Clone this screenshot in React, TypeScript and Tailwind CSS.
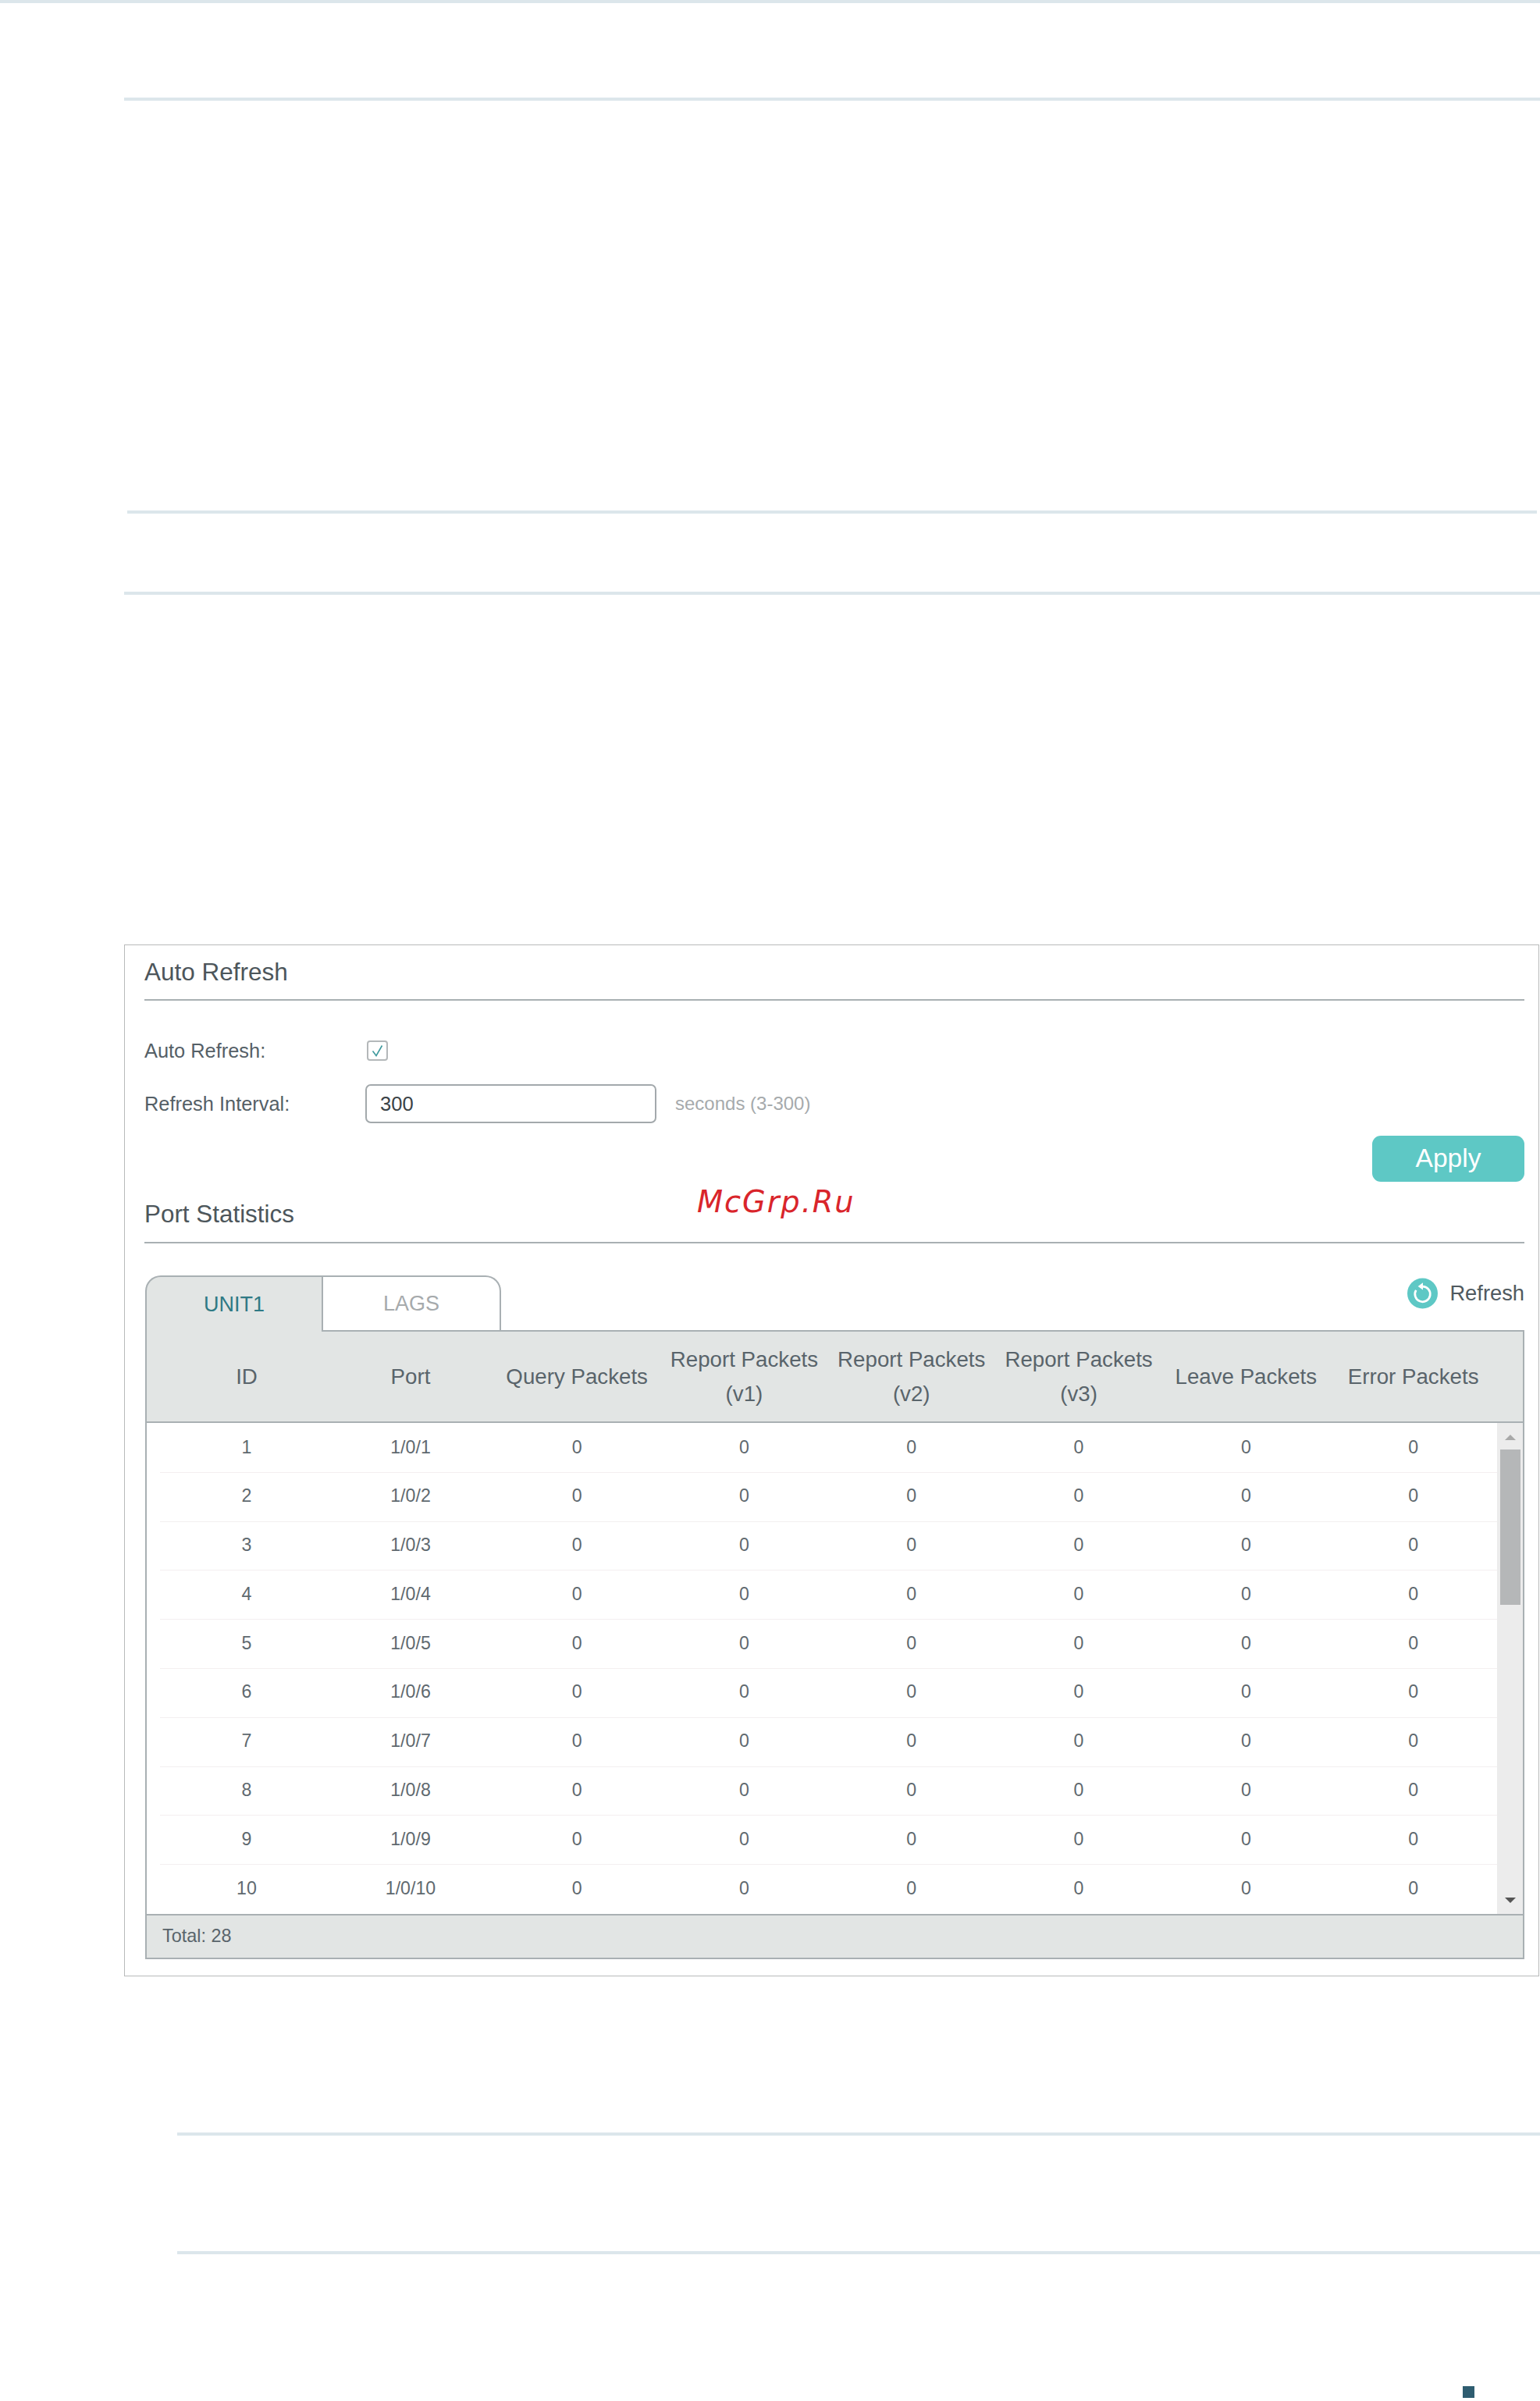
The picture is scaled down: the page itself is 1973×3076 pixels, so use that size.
import React from 'react';

const rows = [1, 2, 3, 4, 5, 6, 7, 8, 9, 10];
const counters = [0, 1, 2, 3, 4, 5];
const colsClass = 'grid grid-cols-[208px_212px_repeat(6,214.3px)] items-center text-center';

const Rule: React.FC<{ className: string }> = ({ className }) => (
  <div className={'h-[4px] bg-[#dce6eb] ' + className} />
);

const RefreshIcon: React.FC = () => (
  <svg width="39" height="40" viewBox="0 0 40 40">
    <circle cx="20" cy="20" r="20" fill="#5ec8c5" />
    <path d="M20 11 A10 10 0 1 1 11.5 15.8" fill="none" stroke="#fff" strokeWidth="2.8" />
    <polygon points="20.5,6 20.5,15.5 14,10.8" fill="#fff" />
  </svg>
);

const App: React.FC = () => {
  return (
    <div className="relative w-full h-[3076px] bg-white overflow-hidden font-['Liberation_Sans',Arial,sans-serif]">
      <Rule className="w-full" />
      <Rule className="mt-[121px] ml-[159px]" />
      <Rule className="mt-[525px] ml-[163px] w-[1806px]" />
      <Rule className="mt-[100px] ml-[159px]" />

      <div className="relative mt-[448px] ml-[159px] w-[1813px] h-[1322px] border border-[#b8baba] pl-[25px] pt-px">
        <div className="w-[1768px] flex flex-col">
          <div className="h-[70px] flex items-center border-b-2 border-[#a9b0b3] text-[31.5px] text-[#4d565b]">
            Auto Refresh
          </div>

          <div className="mt-[51px] h-[26px] flex items-center text-[25.4px] text-[#556067]">
            <span className="w-[285px]">Auto Refresh:</span>
            <div className="w-[27px] h-[26px] flex items-center justify-center rounded-[4px] border-2 border-[#b4b8ba]">
              <svg width="17" height="18" viewBox="0 0 17 18">
                <path d="M2.5 9.5 L7 15.5 L14.5 2.5" fill="none" stroke="#3f9a9e" strokeWidth="1.6" />
              </svg>
            </div>
          </div>

          <div className="mt-[30px] h-[50px] flex items-center text-[25.4px] text-[#556067]">
            <span className="w-[283px]">Refresh Interval:</span>
            <input
              readOnly
              value="300"
              className="w-[373px] h-[50px] pl-[17px] rounded-[7px] border-2 border-[#a3a9ac] text-[25.6px] text-[#3b4347] outline-none"
            />
            <span className="ml-[24px] text-[24px] text-[#a6aaac]">seconds (3-300)</span>
          </div>

          <button className="mt-[16px] self-end w-[195px] h-[59px] rounded-[11px] bg-[#5ec8c5] text-[33.6px] text-white">
            Apply
          </button>

          <div className="mt-[7px] h-[72px] flex items-center border-b-2 border-[#a9b0b3] text-[31.4px] text-[#4d565b]">
            Port Statistics
          </div>

          <div className="mt-[41px] ml-px w-[1767px]">
            <div className="flex h-[72px]">
              <div className="w-[228px] flex items-center justify-center rounded-tl-[20px] border-2 border-b-0 border-[#a9b0b3] bg-[#e2e5e4] text-[27px] text-[#2f7a85]">
                UNIT1
              </div>
              <div className="w-[228px] flex items-center justify-center rounded-tr-[20px] border-2 border-l-0 border-[#a9b0b3] bg-white text-[27px] text-[#a6aaac]">
                LAGS
              </div>
              <div className="flex-1 flex justify-end items-start pt-[3px] border-b-2 border-[#a9b0b3]">
                <div className="flex items-center gap-[15px] text-[27.3px] text-[#505a60]">
                  <RefreshIcon />
                  <span>Refresh</span>
                </div>
              </div>
            </div>

            <div className="border-x-2 border-b-2 border-[#a9b0b3]">
              <div className={'h-[117px] pl-[24px] border-b-2 border-[#a9b0b3] bg-[#e2e5e4] text-[27.7px] leading-[44px] text-[#59646b] ' + colsClass}>
                <div>ID</div>
                <div>Port</div>
                <div>Query Packets</div>
                <div>Report Packets<br />(v1)</div>
                <div>Report Packets<br />(v2)</div>
                <div>Report Packets<br />(v3)</div>
                <div>Leave Packets</div>
                <div>Error Packets</div>
              </div>

              <div className="flex h-[629px]">
                <div className="w-[1730px] pt-px">
                  {rows.map((n) => (
                    <div
                      key={n}
                      className={'ml-[17px] h-[62.8px] pl-[7px] pb-[2px] text-[23.2px] text-[#5f696f] ' + (n < 10 ? 'border-b border-[#f3eff0] ' : '') + colsClass}
                    >
                      <div>{n}</div>
                      <div>1/0/{n}</div>
                      {counters.map((c) => (
                        <div key={c}>0</div>
                      ))}
                    </div>
                  ))}
                </div>
                <div className="flex-1 flex flex-col items-center bg-[#ececec]">
                  <svg className="mt-[15px]" width="14" height="7" viewBox="0 0 14 7">
                    <polygon points="7,0 14,7 0,7" fill="#a9a9a9" />
                  </svg>
                  <div className="mt-[12px] w-[26px] h-[199px] bg-[#b5b7b8]" />
                  <svg className="mt-auto mb-[14px]" width="14" height="7" viewBox="0 0 14 7">
                    <polygon points="0,0 14,0 7,7" fill="#555" />
                  </svg>
                </div>
              </div>

              <div className="h-[56px] pl-[20px] flex items-center border-t-2 border-[#a9b0b3] bg-[#e2e5e4] text-[23.4px] text-[#59646b]">
                Total: 28
              </div>
            </div>
          </div>
        </div>

        <div className="absolute left-[733px] top-[309px] font-['DejaVu_Sans',sans-serif] italic text-[38.4px] leading-[40px] tracking-[1.9px] text-[#d9252b]">
          McGrp.Ru
        </div>
      </div>

      <Rule className="mt-[200px] ml-[227px]" />
      <Rule className="mt-[148px] ml-[227px]" />
      <div className="mt-[169px] ml-[1874px] w-[15px] h-[15px] bg-[#2f5d70]" />
    </div>
  );
};

export default App;
